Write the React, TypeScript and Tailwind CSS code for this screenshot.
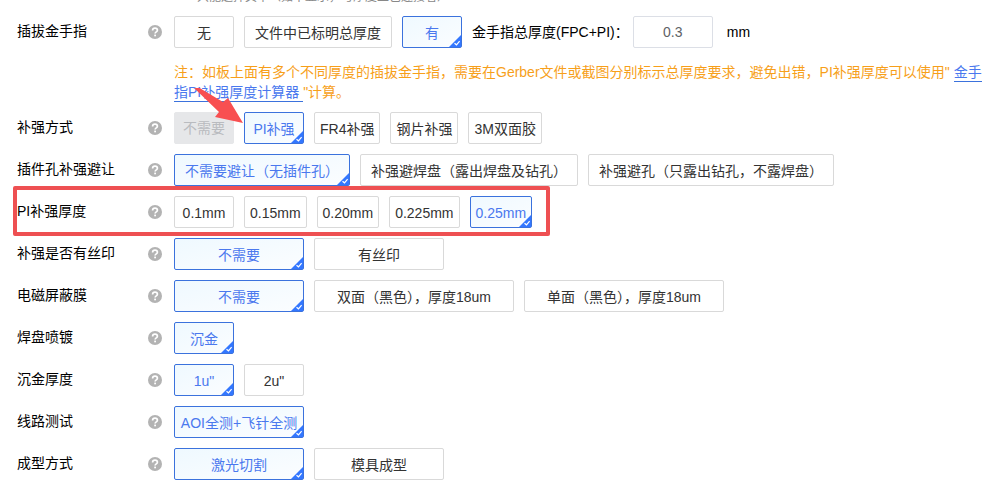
import { useState, type ReactNode } from "react";

type Size = "sm" | "md" | "lg";

interface Option {
  text: string;
  size?: Size;
  wide?: boolean;
  disabled?: boolean;
}

const minWidths: Record<Size, string> = {
  sm: "min-w-[60px]",
  md: "min-w-[130px]",
  lg: "min-w-[200px]",
};

function HelpIcon() {
  return (
    <svg viewBox="0 0 14 14" className="size-3.5" aria-hidden="true">
      <circle cx="7" cy="7" r="7" fill="#b3b3b3" />
      <path
        d="M4.600 5.500C4.600 4 5.600 3.200 7 3.200s2.400.8 2.400 2.100c0 1.600-2.300 1.600-2.300 3.300"
        fill="none"
        stroke="#fff"
        strokeWidth="1.700"
      />
      <rect x="6.200" y="9.600" width="1.800" height="1.700" fill="#fff" />
    </svg>
  );
}

function CornerCheck() {
  return (
    <svg viewBox="0 0 12 12" className="absolute right-0 bottom-0 size-3" aria-hidden="true">
      <path d="M12 0V12H0Z" fill="#3377ff" />
      <path d="M5.500 8.200L7.500 9.800L10.600 6.200" fill="none" stroke="#fff" strokeWidth="1.200" />
    </svg>
  );
}

function OptionButton({
  option,
  selected,
  onSelect,
}: {
  option: Option;
  selected: boolean;
  onSelect: () => void;
}) {
  const tone = option.disabled
    ? "border-[#e6e7e9] bg-[#e6e7e9] text-[#b9bbbf] pb-px"
    : selected
      ? "border-[#3b72dd] bg-linear-to-br from-[#eff9ff] to-[#fbfdff] text-[#4a78ee] pt-0.5"
      : "border-[#d9d9d9] bg-white text-[#333] pt-0.5";
  return (
    <button
      type="button"
      aria-pressed={selected}
      disabled={option.disabled}
      onClick={onSelect}
      className={`relative h-8 shrink-0 rounded-xs border text-sm whitespace-nowrap ${minWidths[option.size ?? "sm"]} ${option.wide ? "px-2.5" : "px-[5px]"} ${tone}`}
    >
      {option.text}
      {selected && <CornerCheck />}
    </button>
  );
}

function FormRow({
  label,
  options,
  initial,
  extra,
  overlay,
}: {
  label: string;
  options: Option[];
  initial: number;
  extra?: ReactNode;
  overlay?: ReactNode;
}) {
  const [value, setValue] = useState(initial);
  return (
    <div role="group" aria-label={label} className="relative flex items-start">
      <div className="flex h-8 w-[131px] shrink-0 items-center text-sm text-black">
        <span className="pb-0.5">{label}</span>
      </div>
      <button type="button" aria-label={`${label}说明`} className="flex h-8 w-[26px] shrink-0 items-center">
        <HelpIcon />
      </button>
      <div className="flex flex-wrap items-center gap-2.5">
        {options.map((option, index) => (
          <OptionButton
            key={option.text}
            option={option}
            selected={index === value}
            onSelect={() => setValue(index)}
          />
        ))}
        {extra}
      </div>
      {overlay}
    </div>
  );
}

function ThicknessField() {
  const [thickness, setThickness] = useState("0.3");
  return (
    <div className="flex items-center text-sm text-black">
      <label htmlFor="finger-thickness" className="pr-1">
        金手指总厚度(FPC+PI)：
      </label>
      <input
        id="finger-thickness"
        value={thickness}
        onChange={(event) => setThickness(event.target.value)}
        className="h-8 w-20 rounded-xs border border-[#dcdfe6] bg-white text-center text-[#606266] outline-none"
      />
      <span className="pl-3.5">mm</span>
    </div>
  );
}

function PointerArrow() {
  return (
    <svg
      viewBox="0 0 54 40"
      className="pointer-events-none absolute -top-6 left-[175px] h-10 w-[54px]"
      aria-hidden="true"
    >
      <path d="M1 -1H6L31 14L36 10L51 35L23 29L27 24Z" fill="#f84f51" />
    </svg>
  );
}

export default function App() {
  return (
    <main
      lang="zh-CN"
      className="min-h-screen overflow-hidden bg-white font-['Liberation_Sans','Noto_Sans_CJK_SC',sans-serif]"
    >
      <div className="flex h-[3px] items-end overflow-hidden pl-[197px]">
        <p className="text-xs leading-3 whitespace-nowrap text-[#888]">
          只能选择其中（如不显示，与厚度工艺连接着）
        </p>
      </div>
      <form className="flex flex-col gap-2.5 pt-[13px] pl-[17px]" onSubmit={(event) => event.preventDefault()}>
        <div>
          <FormRow
            label="插拔金手指"
            initial={2}
            options={[{ text: "无" }, { text: "文件中已标明总厚度", wide: true }, { text: "有" }]}
            extra={<ThicknessField />}
          />
          <p className="mt-3.5 pr-4 pl-[157px] text-sm leading-5 text-[#f79f1a]">
            注：如板上面有多个不同厚度的插拔金手指，需要在Gerber文件或截图分别标示总厚度要求，避免出错，PI补强厚度可以使用"{" "}
            <a href="#calculator" className="border-b border-[#3b72dd] pb-px text-[#4a78ee]">
              金手指PI补强厚度计算器{" "}
            </a>
            "计算。
          </p>
        </div>
        <FormRow
          label="补强方式"
          initial={1}
          options={[
            { text: "不需要", disabled: true },
            { text: "PI补强" },
            { text: "FR4补强" },
            { text: "钢片补强" },
            { text: "3M双面胶" },
          ]}
          overlay={<PointerArrow />}
        />
        <FormRow
          label="插件孔补强避让"
          initial={0}
          options={[
            { text: "不需要避让（无插件孔）", wide: true },
            { text: "补强避焊盘（露出焊盘及钻孔）", wide: true },
            { text: "补强避孔（只露出钻孔，不露焊盘）", wide: true },
          ]}
        />
        <FormRow
          label="PI补强厚度"
          initial={4}
          options={[
            { text: "0.1mm" },
            { text: "0.15mm" },
            { text: "0.20mm" },
            { text: "0.225mm" },
            { text: "0.25mm" },
          ]}
          overlay={
            <div className="pointer-events-none absolute -top-2.5 -left-1 h-[50px] w-[537px] rounded-xs border-4 border-[#ee5052]" />
          }
        />
        <FormRow
          label="补强是否有丝印"
          initial={0}
          options={[
            { text: "不需要", size: "md" },
            { text: "有丝印", size: "md" },
          ]}
        />
        <FormRow
          label="电磁屏蔽膜"
          initial={0}
          options={[
            { text: "不需要", size: "md" },
            { text: "双面（黑色），厚度18um", size: "lg" },
            { text: "单面（黑色），厚度18um", size: "lg" },
          ]}
        />
        <FormRow label="焊盘喷镀" initial={0} options={[{ text: "沉金" }]} />
        <FormRow label="沉金厚度" initial={0} options={[{ text: '1u"' }, { text: '2u"' }]} />
        <FormRow label="线路测试" initial={0} options={[{ text: "AOI全测+飞针全测", size: "md" }]} />
        <FormRow
          label="成型方式"
          initial={0}
          options={[
            { text: "激光切割", size: "md" },
            { text: "模具成型", size: "md" },
          ]}
        />
      </form>
    </main>
  );
}
